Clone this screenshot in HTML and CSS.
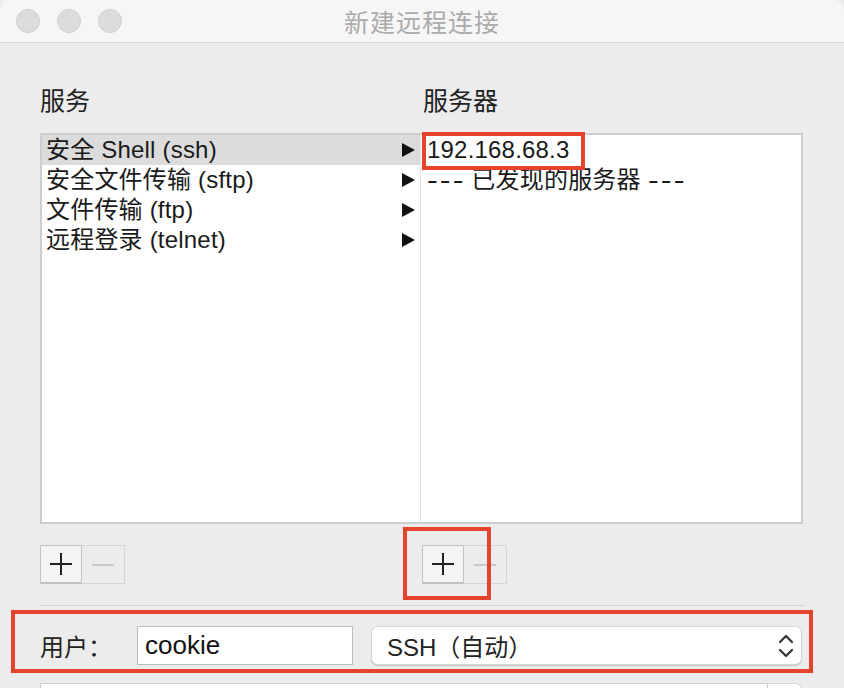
FILE: index.html
```html
<!DOCTYPE html>
<html lang="zh-CN">
<head>
<meta charset="utf-8">
<title>新建远程连接</title>
<link rel="stylesheet" href="styles.css">
</head>
<body>
<div class="window">
  <header class="titlebar">
    <div class="lights">
      <span class="light"></span>
      <span class="light"></span>
      <span class="light"></span>
    </div>
    <div class="title">新建远程连接</div>
    <div></div>
  </header>
  <main class="content">
    <div class="columns">
      <h2 class="label">服务</h2>
      <h2 class="label label-right">服务器</h2>
      <ul class="list list-left">
        <li class="row selected"><span>安全 Shell (ssh)</span><i class="arrow"></i></li>
        <li class="row"><span>安全文件传输 (sftp)</span><i class="arrow"></i></li>
        <li class="row"><span>文件传输 (ftp)</span><i class="arrow"></i></li>
        <li class="row"><span>远程登录 (telnet)</span><i class="arrow"></i></li>
      </ul>
      <ul class="list list-right">
        <li class="row"><span class="hl">192.168.68.3</span></li>
        <li class="row"><span><span class="dash">---</span> 已发现的服务器 <span class="dash">---</span></span></li>
      </ul>
      <div class="btns">
        <button class="btn btn-add"><svg width="22" height="22" viewBox="0 0 22 22"><path d="M11 0V22M0 11H22" stroke="#222" stroke-width="2"/></svg></button>
        <button class="btn btn-remove"><svg width="22" height="22" viewBox="0 0 22 22"><path d="M0 11H22" stroke="#c9c9c9" stroke-width="2"/></svg></button>
      </div>
      <div class="btns btns-right">
        <button class="btn btn-add"><svg width="22" height="22" viewBox="0 0 22 22"><path d="M11 0V22M0 11H22" stroke="#222" stroke-width="2"/></svg></button>
        <button class="btn btn-remove"><svg width="22" height="22" viewBox="0 0 22 22"><path d="M0 11H22" stroke="#c9c9c9" stroke-width="2"/></svg></button>
        <span class="mark mark-btn"></span>
      </div>
    </div>
    <hr class="sep">
    <div class="user-row">
      <label class="user-label">用户：</label>
      <div class="field user-field">cookie</div>
      <div class="select">
        <span>SSH（自动）</span>
        <svg class="chev" width="18" height="30" viewBox="0 0 18 30"><path d="M3 11L9 5L15 11M3 19L9 25L15 19" fill="none" stroke="#333" stroke-width="2.2" stroke-linecap="round" stroke-linejoin="round"/></svg>
      </div>
      <span class="mark mark-user"></span>
    </div>
    <div class="next-row">
      <div class="field next-field"></div>
      <div class="next-btn"></div>
    </div>
  </main>
</div>
</body>
</html>
```
FILE: styles.css
```css
html, body {
  margin: 0;
  padding: 0;
  height: 688px;
  overflow: hidden;
}
body {
  background: #ececec;
  font-family: "Liberation Sans", "Noto Sans CJK SC", sans-serif;
  color: #1a1a1a;
}
.window {
  width: 844px;
}
.titlebar {
  height: 42px;
  background: #f6f6f6;
  border-bottom: 1px solid #d6d6d6;
  display: grid;
  grid-template-columns: 1fr auto 1fr;
  align-items: center;
  border-top-left-radius: 10px;
  border-top-right-radius: 10px;
}
.lights {
  display: flex;
  gap: 17px;
  padding-left: 16px;
}
.light {
  width: 22px;
  height: 22px;
  border-radius: 50%;
  background: #dcdcdc;
  border: 1px solid #d0d0d0;
}
.title {
  font-family: "Noto Sans CJK SC", sans-serif;
  font-size: 25px;
  color: #ababab;
  letter-spacing: 1px;
  line-height: 30px;
}
.content {
  padding: 40px 41px 0 40px;
}
.columns {
  display: grid;
  grid-template-columns: 381px 382px;
}
.label {
  margin: 0;
  font-family: "Noto Sans CJK SC", sans-serif;
  font-weight: 400;
  font-size: 25px;
  line-height: 32px;
  color: #222;
  height: 50px;
}
.label-right {
  padding-left: 2px;
}
.list {
  list-style: none;
  margin: 0;
  padding: 0;
  height: 387px;
  background: #fff;
  border: 2px solid #cdcdcd;
}
.list-left {
  border-right: 1px solid #e3e3e3;
}
.list-right {
  border-left: none;
}
.row {
  height: 30px;
  display: flex;
  align-items: center;
  justify-content: space-between;
  font-size: 24px;
  line-height: 30px;
  white-space: nowrap;
  letter-spacing: 0.2px;
}
.dash {
  display: inline-block;
  transform: scaleX(1.35);
  transform-origin: left center;
  margin-right: 9px;
  letter-spacing: 1.5px;
}
.list-left .row {
  padding-left: 4px;
  padding-right: 5px;
}
.list-right .row {
  padding-left: 6px;
  justify-content: flex-start;
}
.row.selected {
  background: #dcdcdc;
}
.arrow {
  width: 0;
  height: 0;
  border-left: 13px solid #111;
  border-top: 7px solid transparent;
  border-bottom: 7px solid transparent;
}
.hl {
  position: relative;
}
.hl::after {
  content: "";
  position: absolute;
  left: -5px;
  right: -15px;
  top: -3px;
  bottom: -5px;
  border: 4px solid #e5432d;
}
.btns {
  margin-top: 21px;
  display: flex;
  position: relative;
  width: 85px;
}
.btns-right {
  margin-left: 1px;
}
.btn {
  width: 42px;
  height: 39px;
  padding: 0;
  display: flex;
  align-items: center;
  justify-content: center;
  box-sizing: border-box;
}
.btn-add {
  background: #f4f4f4;
  border: 1px solid #c2c2c2;
  border-bottom-width: 2px;
}
.btn-remove {
  background: #ececec;
  border: 1px solid #d6d6d6;
  border-left: none;
  width: 43px;
}
.mark {
  position: absolute;
  border: 4px solid #e5432d;
  pointer-events: none;
}
.mark-btn {
  left: -19px;
  top: -18px;
  width: 80px;
  height: 65px;
}
.sep {
  margin: 21px -2px 0 0;
  border: none;
  border-top: 1px solid #d2d2d2;
  height: 0;
}
.user-row {
  position: relative;
  margin-top: 20px;
  display: flex;
  align-items: center;
  height: 39px;
}
.user-label {
  width: 97px;
  font-family: "Noto Sans CJK SC", sans-serif;
  font-size: 24px;
  color: #222;
}
.field {
  box-sizing: border-box;
  background: #fff;
  border: 1px solid #bdbdbd;
}
.user-field {
  width: 216px;
  height: 39px;
  padding-left: 7px;
  font-size: 26px;
  line-height: 37px;
  color: #111;
}
.select {
  margin-left: 18px;
  width: 431px;
  height: 39px;
  box-sizing: border-box;
  background: #fff;
  border: 1px solid #d8d8d8;
  border-radius: 7px;
  box-shadow: 0 1px 1px rgba(0,0,0,0.18);
  display: flex;
  align-items: center;
  justify-content: space-between;
  padding: 0 6px 0 15px;
  font-size: 24px;
  color: #222;
}
.chev {
  display: block;
}
.mark-user {
  left: -29px;
  right: -10px;
  top: -16px;
  bottom: -8px;
}
.next-row {
  margin-top: 18px;
  display: flex;
  height: 5px;
  overflow: hidden;
}
.next-field {
  width: 728px;
  height: 40px;
  border-color: #cfcfcf;
}
.next-btn {
  width: 34px;
  height: 40px;
  box-sizing: border-box;
  background: #fff;
  border: 1px solid #d8d8d8;
  border-left: none;
  border-radius: 0 7px 0 0;
}
```
